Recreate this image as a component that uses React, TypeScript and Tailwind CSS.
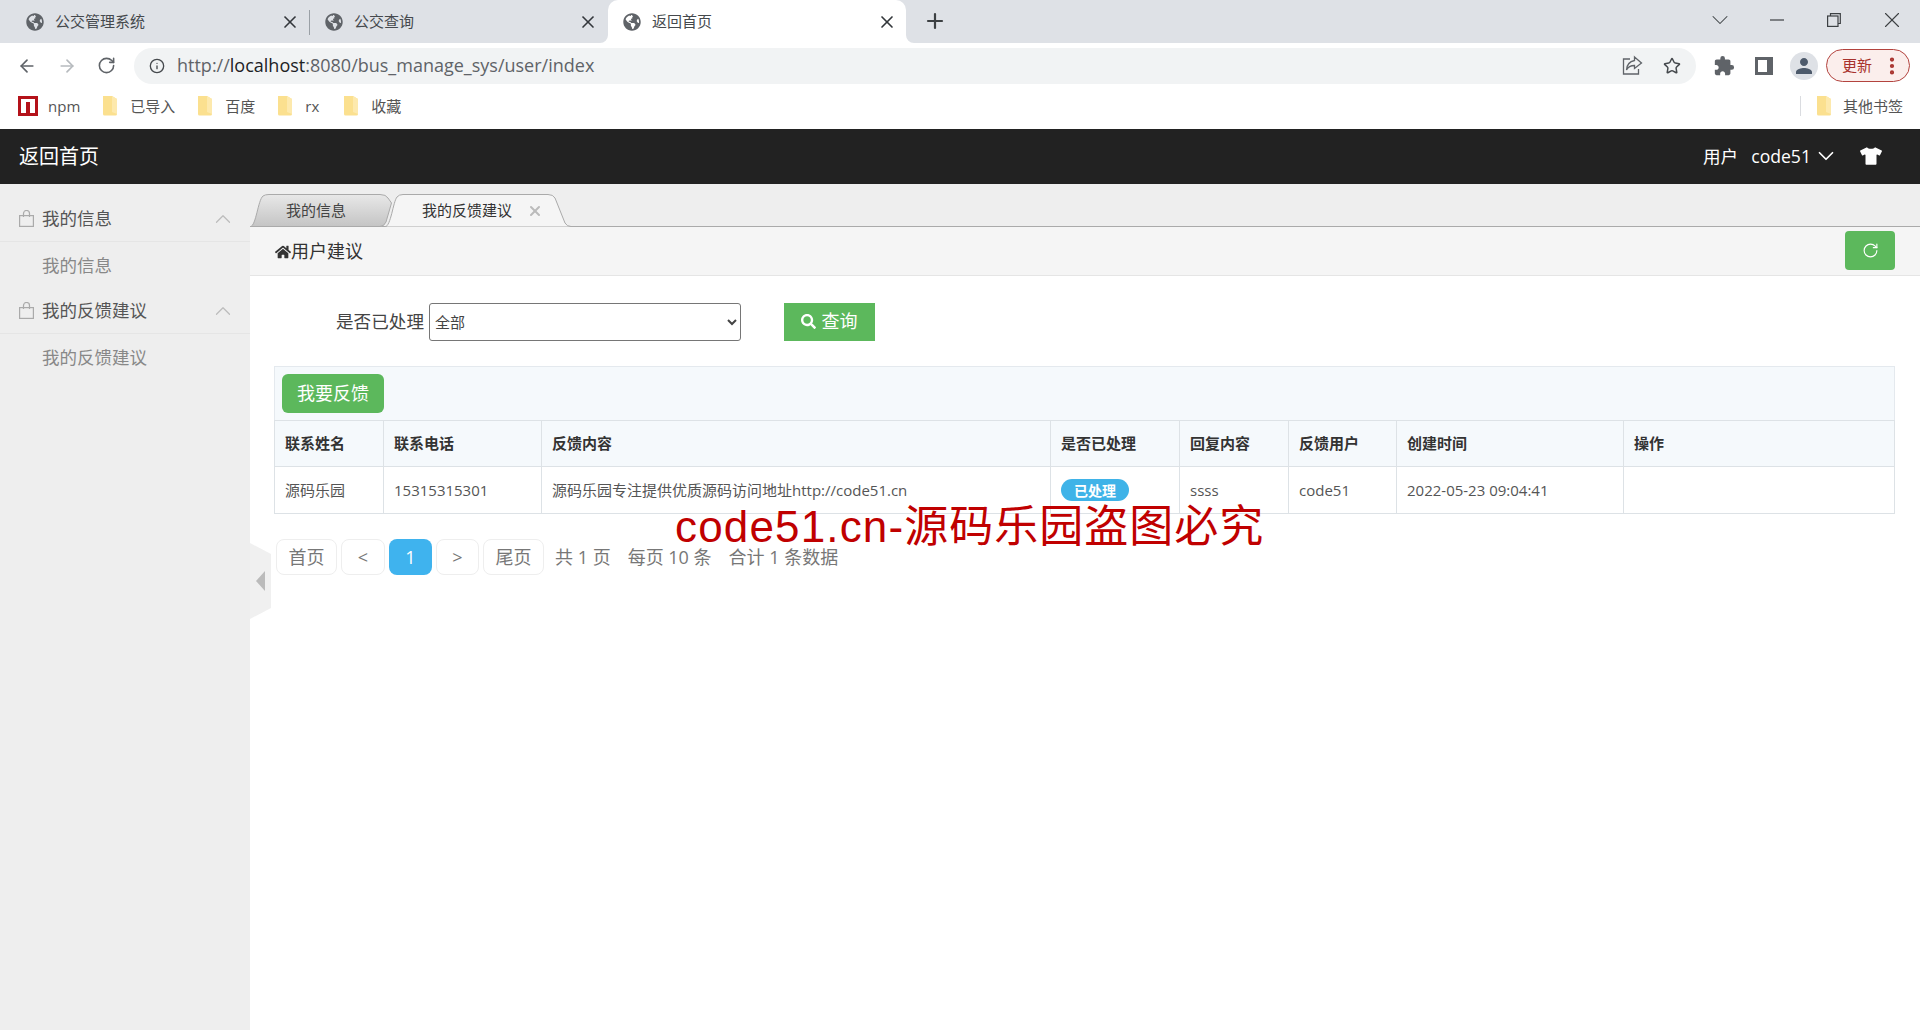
import React from 'react';
import { ArrowLeft, ArrowRight, ChevronDown, ChevronUp, Info, MoreVertical, Plus, RotateCw, Star, X } from 'lucide-react';
import { FaGlobeAmericas, FaHome, FaSearch, FaTshirt } from 'react-icons/fa';
import { MdExtension, MdPerson } from 'react-icons/md';

const Folder = () => (
  <svg width="16" height="20" viewBox="0 0 16 20" className="shrink-0">
    <path d="M1 0h9l5 3v15a1.5 1.5 0 0 1-1.5 1.500h-11A1.500 1.500 0 0 1 1 18z" fill="#fbe08f" />
    <path d="M10 0l5 3v15l-5-2z" fill="#fde9ad" />
  </svg>
);

const Bag = () => (
  <svg width="15" height="17" viewBox="0 0 15 17" fill="none" stroke="#aaa" strokeWidth="1.2" className="shrink-0">
    <rect x="0.6" y="5.600" width="13.800" height="10.800" />
    <path d="M4.500 7V3.500a3 3 0 0 1 6 0V7" />
  </svg>
);

const ChromeTab = ({ title, active, className }: { title: string; active?: boolean; className: string }) => (
  <div className={`relative flex h-full items-center ${active ? 'rounded-t-[10px] bg-white' : ''} ${className}`}>
    {active && (
      <>
        <svg width="8" height="8" viewBox="0 0 8 8" className="absolute bottom-0 -left-2"><path d="M8 0v8H0a8 8 0 0 0 8-8z" fill="#fff" /></svg>
        <svg width="8" height="8" viewBox="0 0 8 8" className="absolute -right-2 bottom-0"><path d="M0 0v8h8a8 8 0 0 1-8-8z" fill="#fff" /></svg>
      </>
    )}
    <FaGlobeAmericas className="size-[18px] shrink-0 text-[#5f6368]" />
    <span className="ml-[11px] text-[15px] text-[#45494d]">{title}</span>
    <X className="ml-auto size-[20px] text-[#33373b]" strokeWidth={2} />
  </div>
);

const Bookmark = ({ label, className }: { label: string; className: string }) => (
  <div className={`flex items-center ${className}`}>
    <Folder />
    <span className="ml-[12px] text-[15px] text-[#555]">{label}</span>
  </div>
);

const BrowserChrome = () => (
  <>
    <div className="flex h-[43px] bg-[#dee1e6] pl-[26px]">
      <ChromeTab title="公交管理系统" className="w-[283px] pr-[9px]" />
      <div className="mt-[10px] h-[25px] w-px bg-[#9aa0a6]" />
      <ChromeTab title="公交查询" className="w-[298px] pr-[10px] pl-[15px]" />
      <ChromeTab title="返回首页" active className="w-[298px] pr-[9px] pl-[15px]" />
      <Plus className="mt-[9px] ml-[17px] size-[24px] text-[#3c4043]" strokeWidth={2.2} />
      <div className="ml-auto flex items-center pr-[15px] pb-[4px] text-[#3c4043]">
        <ChevronDown className="size-[28px]" strokeWidth={0.9} />
        <svg width="14" height="2" viewBox="0 0 14 2" className="ml-[36px]"><path d="M0 1h14" stroke="#3c4043" strokeWidth="1.2" /></svg>
        <svg width="14" height="14" viewBox="0 0 14 14" fill="none" stroke="#3c4043" strokeWidth="1.2" className="ml-[43px]">
          <rect x="0.600" y="3" width="10.400" height="10.400" />
          <path d="M3.500 3V0.700h9.800v9.800H11" />
        </svg>
        <X className="ml-[38px] size-[26px]" strokeWidth={1} />
      </div>
    </div>
    <div className="flex h-[41px] items-center bg-white pt-[4px] pl-[17px]">
      <ArrowLeft className="size-[20px] text-[#5f6368]" strokeWidth={2} />
      <ArrowRight className="ml-[20px] size-[20px] text-[#b6babe]" strokeWidth={2} />
      <RotateCw className="ml-[20px] size-[19px] text-[#5f6368]" strokeWidth={2} />
      <div className="ml-[18px] flex h-[36px] w-[1562px] shrink-0 items-center rounded-full bg-[#f1f3f4] pl-[15px]">
        <Info className="size-[16px] text-[#45494d]" strokeWidth={2} />
        <span className="ml-[12px] text-[18px] text-[#5f6368]">
          http://<span className="text-[#202124]">localhost</span>:8080/bus_manage_sys/user/index
        </span>
        <svg width="21" height="21" viewBox="0 0 21 21" fill="none" stroke="#5f6368" strokeWidth="1.300" className="mr-[20px] ml-auto">
          <path d="M8 4H1.500v15h15v-5" />
          <path d="M12.500 2l7 6-7 5.500V10.500c-4 0-6.500 1.500-8 4.500 .3-5 3-8.500 8-9.500z" />
        </svg>
        <Star className="mr-[15px] size-[18px] text-[#45494d]" strokeWidth={2} />
      </div>
      <MdExtension className="ml-[17px] size-[22px] text-[#5f6368]" />
      <svg width="18" height="18" viewBox="0 0 18 18" className="ml-[20px]">
        <rect width="18" height="18" fill="#5f6368" />
        <rect x="3" y="3" width="9" height="12" fill="#fff" />
      </svg>
      <div className="ml-[17px] flex size-[28px] items-center justify-center rounded-full bg-[#dee1e6]">
        <MdPerson className="size-[24px] text-[#4d5a6b]" />
      </div>
      <div className="ml-[8px] flex h-[33px] w-[84px] items-center rounded-full border border-[#b3433e] bg-[#fbeeec] pl-[15px]">
        <span className="text-[15px] text-[#a8322d]">更新</span>
        <MoreVertical className="ml-[9px] size-[22px] text-[#a8322d]" strokeWidth={2.6} />
      </div>
    </div>
    <div className="flex h-[45px] items-center bg-white pb-[1px] pl-[18px]">
      <svg width="20" height="20" viewBox="0 0 20 20" className="shrink-0">
        <rect width="20" height="20" fill="#b4121a" />
        <rect x="3" y="3" width="14" height="14" fill="#fff" />
        <rect x="8" y="6" width="4" height="11" fill="#b4121a" />
      </svg>
      <span className="ml-[10px] text-[15px] text-[#555]">npm</span>
      <Bookmark label="已导入" className="ml-[22px]" />
      <Bookmark label="百度" className="ml-[22px]" />
      <Bookmark label="rx" className="ml-[22px]" />
      <Bookmark label="收藏" className="ml-[24px]" />
      <div className="ml-auto h-[20px] w-px bg-[#dadce0]" />
      <div className="ml-[15px] flex items-center pr-[17px]">
        <Folder />
        <span className="ml-[11px] text-[15px] text-[#555]">其他书签</span>
      </div>
    </div>
  </>
);

const SideGroup = ({ title, className }: { title: string; className?: string }) => (
  <>
    <div className={`flex items-center border-b border-[#e5e5e5] pr-[14px] pl-[19px] ${className ?? 'h-[46px]'}`}>
      <Bag />
      <span className="ml-[8px] text-[17.500px] text-[#555]">{title}</span>
      <ChevronUp className="ml-auto size-[26px] text-[#bbb]" strokeWidth={1.1} />
    </div>
    <div className="flex h-[46px] items-center pl-[42px] text-[17.500px] text-[#888]">{title}</div>
  </>
);

const columns = [109, 158, 509, 129, 109, 108, 227, 271];
const headers = ['联系姓名', '联系电话', '反馈内容', '是否已处理', '回复内容', '反馈用户', '创建时间', '操作'];

const FeedbackTable = () => (
  <div>
    <div className="h-[54px] border border-b-0 border-[#e4e9ee] bg-[#f5f9fc] pt-[7px] pl-[7px]">
      <button className="h-[39px] w-[102px] rounded-md bg-[#5cb85c] text-[18px] text-white">我要反馈</button>
    </div>
    <table className="w-full table-fixed border-collapse text-[15px] text-[#555]">
      <colgroup>
        {columns.map((w, i) => (
          <col key={i} style={{ width: w }} />
        ))}
      </colgroup>
      <thead>
        <tr className="h-[46px] bg-[#f5f9fc]">
          {headers.map((h) => (
            <th key={h} className="border border-[#dde2e6] pl-[10px] text-left font-bold text-[#333]">{h}</th>
          ))}
        </tr>
      </thead>
      <tbody>
        <tr className="h-[47px]">
          <td className="border border-[#dde2e6] pl-[10px]">源码乐园</td>
          <td className="border border-[#dde2e6] pl-[10px]">15315315301</td>
          <td className="border border-[#dde2e6] pl-[10px]">源码乐园专注提供优质源码访问地址http://code51.cn</td>
          <td className="border border-[#dde2e6] pl-[10px]">
            <span className="flex h-[22px] w-[68px] items-center justify-center rounded-full bg-[#3fb3e8] text-[14px] font-bold text-white">已处理</span>
          </td>
          <td className="border border-[#dde2e6] pl-[10px]">ssss</td>
          <td className="border border-[#dde2e6] pl-[10px]">code51</td>
          <td className="border border-[#dde2e6] pl-[10px]">2022-05-23 09:04:41</td>
          <td className="border border-[#dde2e6]" />
        </tr>
      </tbody>
    </table>
  </div>
);

const PageButton = ({ label, className }: { label: string; className: string }) => (
  <button className={`flex h-[36px] items-center justify-center rounded-lg border border-[#eee] bg-white text-[#777] ${className}`}>{label}</button>
);

const Pagination = () => (
  <div className="mt-[25px] flex items-center pl-[2px] text-[18px] text-[#777]">
    <PageButton label="首页" className="w-[61px]" />
    <PageButton label="<" className="ml-[4px] w-[44px]" />
    <button className="ml-[4px] flex h-[36px] w-[43px] items-center justify-center rounded-lg bg-[#3fb3ee] text-white">1</button>
    <PageButton label=">" className="ml-[4px] w-[43px]" />
    <PageButton label="尾页" className="ml-[4px] w-[61px]" />
    <span className="ml-[11px]">共 1 页</span>
    <span className="ml-[17px]">每页 10 条</span>
    <span className="ml-[17px]">合计 1 条数据</span>
  </div>
);

const PageTabs = () => (
  <div className="flex h-[43px] border-b border-[#aaa] bg-[#eee] pt-[10px]">
    <div className="relative flex h-[33px] w-[142px] items-center pl-[36px] text-[15px] text-[#444]">
      <svg width="142" height="33" viewBox="0 0 142 33" className="absolute inset-0">
        <defs>
          <linearGradient id="tabOff" x1="0" y1="0" x2="0" y2="1">
            <stop offset="0" stopColor="#e8e8e8" />
            <stop offset="1" stopColor="#c4c4c4" />
          </linearGradient>
        </defs>
        <path d="M0.500 32.500C6 32 8 6 13 2Q15 .5 19 .5H130Q136 .5 138 4L141.500 9L136 28Q134 32.500 130 32.500Z" fill="url(#tabOff)" stroke="#aaa" />
      </svg>
      <span className="relative">我的信息</span>
    </div>
    <div className="relative -ml-[7px] flex h-[33px] w-[187px] items-center pl-[37px] text-[15px] text-[#333]">
      <svg width="187" height="33" viewBox="0 0 187 33" className="absolute inset-0">
        <path d="M0 33C6 32 8 8 12 3Q14 .5 18 .5H163Q168 .5 170 4L180 29Q182 32.500 186 32.500V33Z" fill="#f5f5f5" stroke="#aaa" />
      </svg>
      <span className="relative">我的反馈建议</span>
      <X className="relative ml-[15px] size-[16px] text-[#bbb]" strokeWidth={3} />
    </div>
  </div>
);

const App = () => (
  <div className="relative h-[1030px] w-[1920px] overflow-hidden bg-white font-['Open_Sans','Noto_Sans_CJK_SC',sans-serif]">
    <BrowserChrome />
    <div className="flex h-[55px] items-center justify-between bg-[#222] pr-[38px] pl-[19px] text-white">
      <span className="text-[20px]">返回首页</span>
      <div className="flex items-center text-[17.600px]">
        <span>用户</span>
        <span className="ml-[13px]">code51</span>
        <ChevronDown className="ml-[2px] size-[26px]" strokeWidth={1.6} />
        <FaTshirt className="ml-[21px] size-[22px]" />
      </div>
    </div>
    <div className="flex h-[846px]">
      <aside className="w-[250px] shrink-0 bg-[#eee]">
        <SideGroup title="我的信息" className="h-[58px] pt-[12px]" />
        <SideGroup title="我的反馈建议" />
      </aside>
      <main className="min-w-0 flex-1">
        <PageTabs />
        <div className="flex h-[49px] items-center justify-between border-b border-[#e5e5e5] bg-[#f5f5f5] pr-[25px] pl-[25px] text-[18px] text-[#333]">
          <div className="flex items-center pt-[1px]">
            <FaHome className="size-[16px]" />
            <span>用户建议</span>
          </div>
          <button className="mb-[2px] flex h-[39px] w-[50px] items-center justify-center rounded bg-[#5cb85c] text-white">
            <RotateCw className="size-[17px]" strokeWidth={1.6} />
          </button>
        </div>
        <div className="pt-[26px] pr-[25px] pl-[24px]">
          <div className="flex h-[39px] items-center pl-[62px]">
            <span className="text-[17.600px] text-[#444]">是否已处理</span>
            <select className="ml-[5px] h-[38px] w-[312px] rounded-[3px] border border-[#767676] bg-white pl-[1px] text-[15px] text-[#444]">
              <option>全部</option>
            </select>
            <button className="ml-[43px] flex h-[38px] w-[91px] items-center justify-center bg-[#5cb85c] text-[18px] text-white">
              <FaSearch className="mr-[5px] size-[15px]" />
              查询
            </button>
          </div>
          <div className="mt-[25px]">
            <FeedbackTable />
          </div>
          <Pagination />
        </div>
      </main>
    </div>
    <svg width="22" height="76" viewBox="0 0 22 76" className="absolute top-[543px] left-[250px]">
      <path d="M0 0L21 11V65L0 76Z" fill="#f0f0f0" />
      <path d="M6 38L15 28V48Z" fill="#bbb" />
    </svg>
    <div className="absolute top-[495px] left-[675px] whitespace-nowrap text-[44px] leading-[56px] text-[#c00000]">
      <span className="font-['Liberation_Sans',sans-serif] tracking-[1.150px]">code51.cn-</span>
      <span className="font-['Noto_Sans_CJK_SC',sans-serif] tracking-[1px]">源码乐园盗图必究</span>
    </div>
  </div>
);

export default App;
